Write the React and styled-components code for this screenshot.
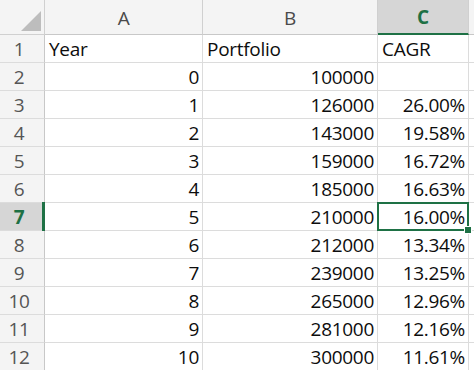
import React from "react";
import styled, { createGlobalStyle } from "styled-components";

const GlobalStyle = createGlobalStyle`
  html, body {
    margin: 0;
    padding: 0;
    background: #ffffff;
    overflow: hidden;
  }
`;

const GREEN = "#1e7145";

const rows = [
  ["Year", "Portfolio", "CAGR"],
  ["0", "100000", ""],
  ["1", "126000", "26.00%"],
  ["2", "143000", "19.58%"],
  ["3", "159000", "16.72%"],
  ["4", "185000", "16.63%"],
  ["5", "210000", "16.00%"],
  ["6", "212000", "13.34%"],
  ["7", "239000", "13.25%"],
  ["8", "265000", "12.96%"],
  ["9", "281000", "12.16%"],
  ["10", "300000", "11.61%"],
];

const ACTIVE_ROW = 7;
const ACTIVE_COL = 2;

const Sheet = styled.div`
  display: grid;
  grid-template-columns: 45px 158px 175px 91px 5px;
  grid-template-rows: 35px repeat(12, 28px);
  width: 474px;
  height: 370px;
  overflow: hidden;
  font-family: "Open Sans", "Noto Sans", sans-serif;
  font-size: 19px;
  letter-spacing: -0.3px;
  color: #0d0d0d;
`;

const Corner = styled.div`
  position: relative;
  background: #f4f4f4;
  border-right: 1px solid #d0d0d0;
  border-bottom: 1px solid #d0d0d0;
  box-sizing: border-box;

  &::after {
    content: "";
    position: absolute;
    right: 3px;
    bottom: 3px;
    width: 0;
    height: 0;
    border-left: 20px solid transparent;
    border-bottom: 20px solid #bdbdbd;
  }
`;

const ColHeader = styled.div`
  box-sizing: border-box;
  display: flex;
  align-items: flex-end;
  justify-content: center;
  padding-bottom: 3px;
  background: ${(p) => (p.$active ? "#d6d6d6" : "#f4f4f4")};
  border-right: 1px solid #d0d0d0;
  border-bottom: ${(p) => (p.$active ? `2px solid ${GREEN}` : "1px solid #c8c8c8")};
  color: ${(p) => (p.$active ? GREEN : "#4a4a4a")};
  font-weight: ${(p) => (p.$active ? 700 : 400)};
`;

const RowHeader = styled.div`
  position: relative;
  box-sizing: border-box;
  display: flex;
  align-items: center;
  justify-content: center;
  padding-right: 6px;
  background: ${(p) => (p.$active ? "#d6d6d6" : "#f4f4f4")};
  border-right: 1px solid #c8c8c8;
  border-bottom: 1px solid #dcdcdc;
  color: ${(p) => (p.$active ? GREEN : "#555")};
  font-weight: ${(p) => (p.$active ? 700 : 400)};

  ${(p) =>
    p.$active &&
    `
    &::after {
      content: "";
      position: absolute;
      right: -1px;
      top: -1px;
      bottom: -1px;
      width: 3px;
      background: ${GREEN};
    }
  `}
`;

const Cell = styled.div`
  position: relative;
  box-sizing: border-box;
  display: flex;
  align-items: center;
  justify-content: ${(p) => (p.$align === "right" ? "flex-end" : "flex-start")};
  padding: 0 3px 0 4px;
  border-right: 1px solid #dcdcdc;
  border-bottom: 1px solid #dcdcdc;
  white-space: nowrap;
  background: #ffffff;

  ${(p) =>
    p.$selected &&
    `
    &::before {
      content: "";
      position: absolute;
      left: -1px;
      top: -1px;
      right: -1px;
      bottom: -1px;
      border: 2px solid ${GREEN};
      pointer-events: none;
    }
  `}
`;

const Handle = styled.span`
  position: absolute;
  right: -4px;
  bottom: -4px;
  width: 6px;
  height: 6px;
  background: ${GREEN};
  border: 1px solid #ffffff;
  z-index: 2;
`;

const Filler = styled.div`
  background: ${(p) => (p.$header ? "#f4f4f4" : "#ffffff")};
  border-bottom: 1px solid ${(p) => (p.$header ? "#c8c8c8" : "#dcdcdc")};
  box-sizing: border-box;
`;

export default function App() {
  const letters = ["A", "B", "C"];
  return (
    <>
      <GlobalStyle />
      <Sheet>
        <Corner />
        {letters.map((l, i) => (
          <ColHeader key={l} $active={i === ACTIVE_COL}>
            {l}
          </ColHeader>
        ))}
        <Filler $header />
        {rows.map((r, ri) => {
          const rowNum = ri + 1;
          return (
            <React.Fragment key={rowNum}>
              <RowHeader $active={rowNum === ACTIVE_ROW}>{rowNum}</RowHeader>
              {r.map((v, ci) => {
                const selected = rowNum === ACTIVE_ROW && ci === ACTIVE_COL;
                return (
                  <Cell
                    key={ci}
                    $align={ri === 0 ? "left" : "right"}
                    $selected={selected}
                  >
                    {v}
                    {selected && <Handle />}
                  </Cell>
                );
              })}
              <Filler />
            </React.Fragment>
          );
        })}
      </Sheet>
    </>
  );
}
